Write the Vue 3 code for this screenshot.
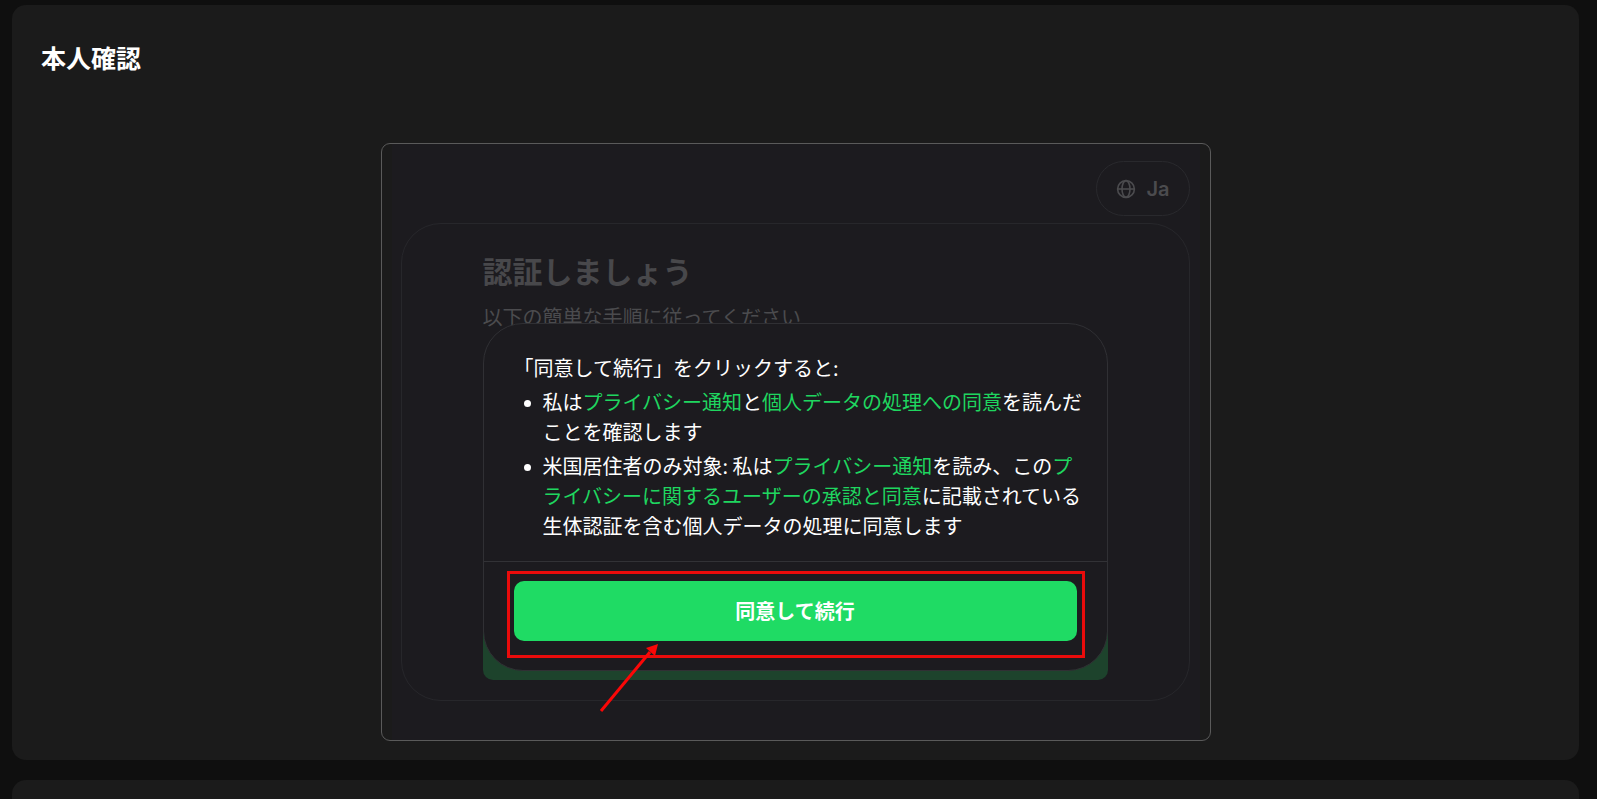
<script setup>
import { ref } from 'vue'

const language = ref('Ja')
</script>

<template>
  <main class="page">
    <section class="card">
      <h1 class="card-title">本人確認</h1>

      <div class="frame">
        <div class="screen">
          <div class="toolbar">
            <button class="language" type="button">
              <svg class="globe" viewBox="0 0 20 20" aria-hidden="true">
                <circle cx="10" cy="10" r="8.4" />
                <ellipse cx="10" cy="10" rx="4" ry="8.4" />
                <path d="M1.600 10h16.800" />
              </svg>
              <span>{{ language }}</span>
            </button>
          </div>

          <div class="panel">
            <h2 class="panel-title">認証しましょう</h2>
            <p class="panel-text">以下の簡単な手順に従ってください</p>
            <button class="start" type="button" aria-label="続行"></button>
          </div>
        </div>

        <div class="dialog" role="dialog" aria-labelledby="consent-lead">
          <div class="consent">
            <p id="consent-lead" class="lead">「同意して続行」をクリックすると:</p>
            <ul class="terms">
              <li>私は<a href="#">プライバシー通知</a>と<a href="#">個人データの処理への同意</a>を読んだことを確認します</li>
              <li>米国居住者のみ対象: 私は<a href="#">プライバシー通知</a>を読み、この<a href="#">プライバシーに関するユーザーの承認と同意</a>に記載されている生体認証を含む個人データの処理に同意します</li>
            </ul>
          </div>
          <div class="actions">
            <button class="agree" type="button">同意して続行</button>
            <div class="highlight"></div>
            <svg class="arrow" viewBox="0 0 60 70" aria-hidden="true">
              <path class="shaft" d="M2 68L51 9" />
              <path class="head" d="M59 1L56 13L47 5Z" />
            </svg>
          </div>
        </div>
      </div>
    </section>

    <section class="card card-next"></section>
  </main>
</template>

<style>
html,
body {
  background: #0f0f0f;
}
</style>

<style scoped>
* {
  box-sizing: border-box;
}
.page {
  display: flex;
  flex-direction: column;
  gap: 20px;
  min-height: 100vh;
  padding: 5px 18px 0 12px;
  font-family: "Noto Sans CJK JP", "Noto Sans", sans-serif;
  color: #fff;
}
.card {
  padding: 34px 29px 19px;
  border-radius: 14px;
  background: #1b1b1b;
}
.card-next {
  flex: 1;
  padding: 0;
  border-radius: 14px 14px 0 0;
}
.card-title {
  margin: 0 0 68px;
  font-size: 25px;
  line-height: 36px;
  font-weight: 700;
}
.frame {
  position: relative;
  max-width: 830px;
  margin: 0 auto;
  padding: 0 10px;
  border: 1px solid #5a5a5a;
  border-radius: 9px;
  background: #1b1b1b;
}
.screen {
  padding: 17px 10px 39px 9px;
  background: #1c1b1f;
}
.toolbar {
  display: flex;
  justify-content: flex-end;
}
.language {
  display: flex;
  align-items: center;
  gap: 10px;
  height: 55px;
  padding: 0 19px;
  border: 1px solid #29292d;
  border-radius: 28px;
  background: transparent;
  color: #4b4b4e;
  font: 600 20px/30px Inter, sans-serif;
}
.globe {
  width: 20px;
  height: 20px;
  fill: none;
  stroke: currentColor;
  stroke-width: 1.6;
}
.panel {
  margin-top: 7px;
  padding: 24px 81px 20px;
  border: 1px solid #27272b;
  border-radius: 40px;
}
.panel-title {
  margin: 0;
  color: #48484b;
  font-size: 30px;
  line-height: 44px;
  font-weight: 700;
}
.panel-text {
  margin: 10px 0 0;
  color: #4b4b4e;
  font-size: 20px;
  line-height: 30px;
}
.start {
  display: block;
  width: 100%;
  height: 60px;
  margin-top: 288px;
  padding: 0;
  border: 0;
  border-radius: 10px;
  background: #1d432c;
}
.dialog {
  position: absolute;
  left: 101px;
  right: 102px;
  bottom: 69px;
  border: 1px solid #303034;
  border-radius: 40px;
  background: #1c1b1f;
}
.consent {
  padding: 29px 19px 20px 30px;
  border-bottom: 1px solid #323236;
  font-size: 20px;
  line-height: 30px;
}
.lead {
  margin: 0;
}
.terms {
  margin: 0;
  padding: 0 0 0 29px;
  list-style: none;
}
.terms li {
  position: relative;
  margin-top: 4px;
}
.terms li::before {
  content: "";
  position: absolute;
  left: -19px;
  top: 13px;
  width: 7px;
  height: 7px;
  border-radius: 50%;
  background: #fff;
}
.terms a {
  color: #1fd65f;
  text-decoration: none;
}
.actions {
  position: relative;
  padding: 19px 30px 29px;
}
.agree {
  display: block;
  width: 100%;
  height: 60px;
  padding: 0;
  border: 0;
  border-radius: 10px;
  background: #1fdb64;
  color: #fff;
  font: 700 20px/30px "Noto Sans CJK JP", sans-serif;
}
.highlight {
  position: absolute;
  inset: 9px 22px 12px 23px;
  border: 3px solid #ea0b0b;
}
.arrow {
  position: absolute;
  left: 115px;
  top: 81px;
  width: 60px;
  height: 70px;
}
.shaft {
  fill: none;
  stroke: #fb0707;
  stroke-width: 3;
}
.head {
  fill: #fb0707;
}
</style>
